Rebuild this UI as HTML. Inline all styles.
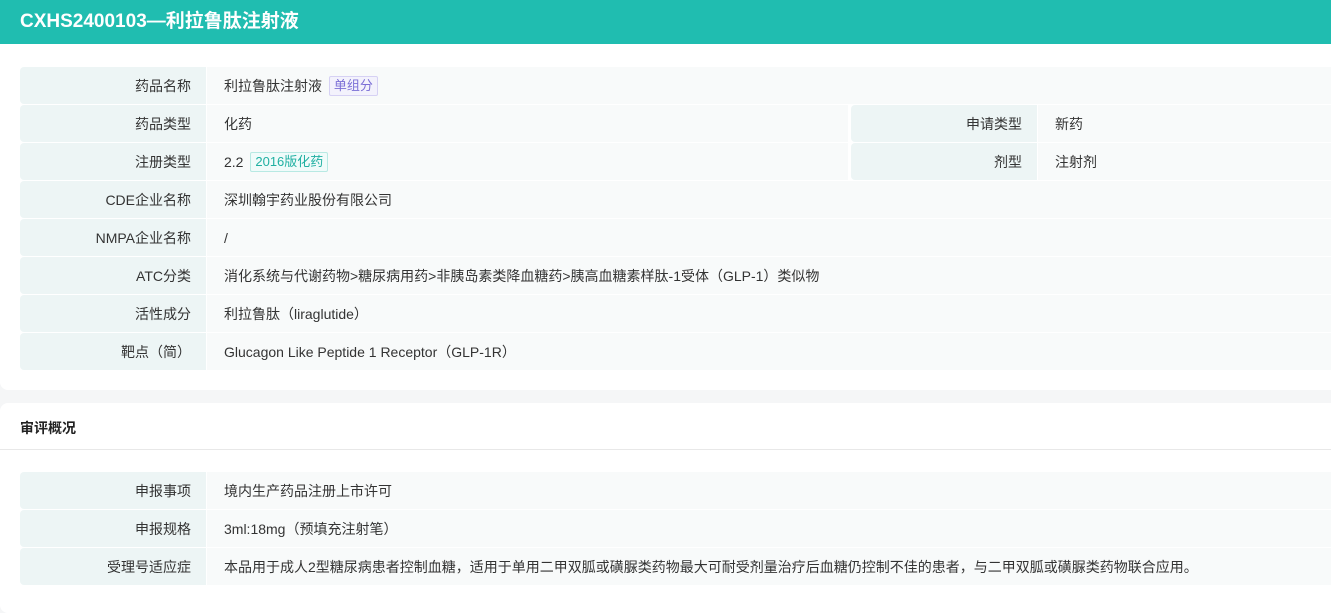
<!DOCTYPE html>
<html><head><meta charset="utf-8"><style>
*{margin:0;padding:0;box-sizing:border-box}
body{width:1331px;height:605px;background:#f5f6f7;font-family:"Liberation Sans","Noto Sans CJK SC",sans-serif;font-size:14px;color:#333;overflow:hidden}
.hd{height:44px;background:#20bdb0;color:#fff;font-weight:bold;font-size:19px;line-height:43px;padding-left:20px}
.card{background:#fff;border-radius:8px;position:absolute;left:0;width:1340px}
.row{position:absolute;left:20px;height:37px;display:flex}
.l{width:186px;background:#edf5f5;text-align:right;padding-right:15px;line-height:38px;border-radius:4px 0 0 4px;margin-right:1px}
.v{background:#f8fafa;line-height:38px;padding-left:17px;flex:1}
.tag{display:inline-block;font-size:13px;line-height:18px;padding:0 4px;border-radius:2px;margin-left:3px;vertical-align:1px}
.t1{color:#7b6fd6;background:#f3f2fc;border:1px solid #d6d1f4}
.t2{color:#20b0a2;background:#f0fbfa;border:1px solid #b8e9e3}
</style></head><body>
<div class="hd">CXHS2400103—利拉鲁肽注射液</div>
<div class="card" style="top:44px;height:346px;border-radius:0 0 8px 8px"></div>
<div class="card" style="top:403px;height:210px"></div>
<div style="position:absolute;left:0;top:449px;width:1331px;height:1px;background:#e8e8e8"></div>
<div style="position:absolute;left:20px;top:418px;font-weight:bold;font-size:14px;color:#222">审评概况</div>

<div class="row" style="top:67px;width:1311px"><div class="l">药品名称</div><div class="v">利拉鲁肽注射液 <span class="tag t1">单组分</span></div></div>
<div class="row" style="top:105px;width:828px"><div class="l">药品类型</div><div class="v">化药</div></div>
<div class="row" style="top:105px;left:851px;width:480px"><div class="l">申请类型</div><div class="v">新药</div></div>
<div class="row" style="top:143px;width:828px"><div class="l">注册类型</div><div class="v">2.2 <span class="tag t2">2016版化药</span></div></div>
<div class="row" style="top:143px;left:851px;width:480px"><div class="l">剂型</div><div class="v">注射剂</div></div>
<div style="position:absolute;left:848px;top:105px;width:3px;height:75px;background:#fff"></div>
<div class="row" style="top:181px;width:1311px"><div class="l">CDE企业名称</div><div class="v">深圳翰宇药业股份有限公司</div></div>
<div class="row" style="top:219px;width:1311px"><div class="l">NMPA企业名称</div><div class="v">/</div></div>
<div class="row" style="top:257px;width:1311px"><div class="l">ATC分类</div><div class="v">消化系统与代谢药物&gt;糖尿病用药&gt;非胰岛素类降血糖药&gt;胰高血糖素样肽-1受体（GLP-1）类似物</div></div>
<div class="row" style="top:295px;width:1311px"><div class="l">活性成分</div><div class="v">利拉鲁肽（liraglutide）</div></div>
<div class="row" style="top:333px;width:1311px"><div class="l">靶点（简）</div><div class="v">Glucagon Like Peptide 1 Receptor（GLP-1R）</div></div>

<div class="row" style="top:472px;width:1311px"><div class="l">申报事项</div><div class="v">境内生产药品注册上市许可</div></div>
<div class="row" style="top:510px;width:1311px"><div class="l">申报规格</div><div class="v">3ml:18mg（预填充注射笔）</div></div>
<div class="row" style="top:548px;width:1311px"><div class="l">受理号适应症</div><div class="v">本品用于成人2型糖尿病患者控制血糖，适用于单用二甲双胍或磺脲类药物最大可耐受剂量治疗后血糖仍控制不佳的患者，与二甲双胍或磺脲类药物联合应用。</div></div>
</body></html>
